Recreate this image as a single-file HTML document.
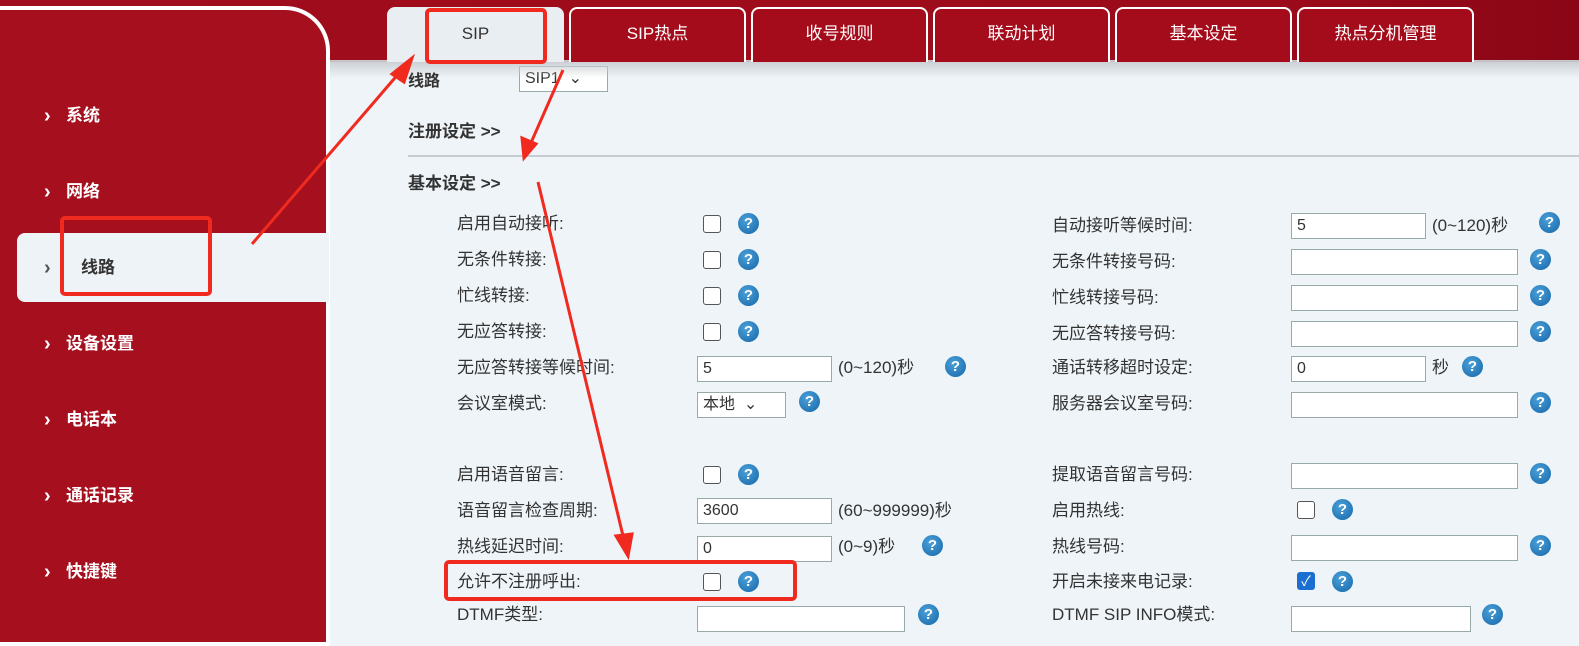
<!DOCTYPE html>
<html><head><meta charset="utf-8"><style>
*{margin:0;padding:0;box-sizing:border-box}
body{width:1579px;height:617px;overflow:hidden;position:relative;background:#eef4f8;font-family:"Liberation Sans","Noto Sans CJK SC",sans-serif;font-size:17px;color:#333}
.hdr{position:absolute;left:0;top:0;width:1579px;height:62px;background:linear-gradient(90deg,#a00d1c 0%,#9c0b1a 80%,#8a0616 100%)}
.shadow{position:absolute;left:330px;top:60px;width:1249px;height:18px;background:linear-gradient(#c9cdd1,rgba(238,244,248,0))}
.side{position:absolute;left:-10px;top:6px;width:340px;height:640px;background:#a50f1e;border:4px solid #fff;border-top-right-radius:45px}
.nav{position:absolute;left:66px;color:#fff;font-weight:bold;font-size:17px;line-height:20px}
.chev{position:absolute;left:44px;color:#fff;font-size:20px;font-weight:bold;line-height:20px}
.active{position:absolute;left:17px;top:233px;width:312px;height:69px;background:#eef3f7;border-radius:8px 0 0 8px}
.tab{position:absolute;top:7px;height:55px;width:177px;border:2px solid #fff;border-bottom:none;border-radius:8px 8px 0 0;background:#a50c1b;color:#fff;text-align:center;line-height:50px;font-size:17px}
.tab.on{background:#e9eef2;color:#333;border-color:#e9eef2}
.lbl{position:absolute;font-size:17px;color:#333;white-space:nowrap;line-height:20px}
.cb{position:absolute;width:18px;height:18px;border:1px solid #555;border-radius:3px;background:#fff}
.cb.chk{background:#1a6fd0;border-color:#1a6fd0}
.q{position:absolute;width:21px;height:21px;border-radius:50%;background:radial-gradient(circle at 40% 35%,#4aa0d8,#1666a8);color:#fff;font-weight:bold;font-size:15px;text-align:center;line-height:21px}
.in{position:absolute;height:26px;border:1px solid #9aa;background:#fff;font-size:16px;padding-left:5px;line-height:24px}
.sec{position:absolute;left:408px;font-weight:bold;font-size:17px;line-height:20px}
</style></head><body>
<div class="hdr"></div>
<div class="in" style="left:519px;top:66px;width:89px;height:26px">SIP1 &nbsp;⌄</div>
<div class="shadow"></div>
<div class="side"></div>
<div class="active"></div>
<div class="chev" style="top:106px">›</div><div class="nav" style="top:106px">系统</div>
<div class="chev" style="top:182px">›</div><div class="nav" style="top:182px">网络</div>
<div class="chev" style="top:258px;color:#555">›</div><div class="nav" style="top:258px;left:81px;color:#333">线路</div>
<div class="chev" style="top:334px">›</div><div class="nav" style="top:334px">设备设置</div>
<div class="chev" style="top:410px">›</div><div class="nav" style="top:410px">电话本</div>
<div class="chev" style="top:486px">›</div><div class="nav" style="top:486px">通话记录</div>
<div class="chev" style="top:562px">›</div><div class="nav" style="top:562px">快捷键</div>

<div class="tab on" style="left:387px">SIP</div>
<div class="tab" style="left:569px">SIP热点</div>
<div class="tab" style="left:751px">收号规则</div>
<div class="tab" style="left:933px">联动计划</div>
<div class="tab" style="left:1115px">基本设定</div>
<div class="tab" style="left:1297px">热点分机管理</div>

<div class="sec" style="top:72px;font-size:16px">线路</div>
<div class="sec" style="top:122px">注册设定 &gt;&gt;</div>
<div style="position:absolute;left:408px;top:155px;width:1171px;height:2px;background:#c8ccd0"></div>
<div class="sec" style="top:174px">基本设定 &gt;&gt;</div>

<div class="lbl" style="left:457px;top:214px">启用自动接听:</div><div class="cb" style="left:703px;top:215px"></div><div class="q" style="left:738px;top:213px">?</div>
<div class="lbl" style="left:457px;top:250px">无条件转接:</div><div class="cb" style="left:703px;top:251px"></div><div class="q" style="left:738px;top:249px">?</div>
<div class="lbl" style="left:457px;top:286px">忙线转接:</div><div class="cb" style="left:703px;top:287px"></div><div class="q" style="left:738px;top:285px">?</div>
<div class="lbl" style="left:457px;top:322px">无应答转接:</div><div class="cb" style="left:703px;top:323px"></div><div class="q" style="left:738px;top:321px">?</div>
<div class="lbl" style="left:457px;top:358px">无应答转接等候时间:</div><div class="in" style="left:697px;top:356px;width:135px">5</div><div class="lbl" style="left:838px;top:358px">(0~120)秒</div><div class="q" style="left:945px;top:356px">?</div>
<div class="lbl" style="left:457px;top:394px">会议室模式:</div><div class="in" style="left:697px;top:392px;width:89px">本地 &nbsp;⌄</div><div class="q" style="left:799px;top:391px">?</div>
<div class="lbl" style="left:457px;top:465px">启用语音留言:</div><div class="cb" style="left:703px;top:466px"></div><div class="q" style="left:738px;top:464px">?</div>
<div class="lbl" style="left:457px;top:501px">语音留言检查周期:</div><div class="in" style="left:697px;top:498px;width:135px">3600</div><div class="lbl" style="left:838px;top:501px">(60~999999)秒</div>
<div class="lbl" style="left:457px;top:537px">热线延迟时间:</div><div class="in" style="left:697px;top:536px;width:135px">0</div><div class="lbl" style="left:838px;top:537px">(0~9)秒</div><div class="q" style="left:922px;top:535px">?</div>
<div class="lbl" style="left:457px;top:572px">允许不注册呼出:</div><div class="cb" style="left:703px;top:573px"></div><div class="q" style="left:738px;top:571px">?</div>
<div class="lbl" style="left:457px;top:605px">DTMF类型:</div><div class="in" style="left:697px;top:606px;width:208px"></div><div class="q" style="left:918px;top:604px">?</div>

<div class="lbl" style="left:1052px;top:216px">自动接听等候时间:</div><div class="in" style="left:1291px;top:213px;width:135px">5</div><div class="lbl" style="left:1432px;top:216px">(0~120)秒</div><div class="q" style="left:1539px;top:212px">?</div>
<div class="lbl" style="left:1052px;top:252px">无条件转接号码:</div><div class="in" style="left:1291px;top:249px;width:227px"></div><div class="q" style="left:1530px;top:249px">?</div>
<div class="lbl" style="left:1052px;top:288px">忙线转接号码:</div><div class="in" style="left:1291px;top:285px;width:227px"></div><div class="q" style="left:1530px;top:285px">?</div>
<div class="lbl" style="left:1052px;top:324px">无应答转接号码:</div><div class="in" style="left:1291px;top:321px;width:227px"></div><div class="q" style="left:1530px;top:321px">?</div>
<div class="lbl" style="left:1052px;top:358px">通话转移超时设定:</div><div class="in" style="left:1291px;top:356px;width:135px">0</div><div class="lbl" style="left:1432px;top:358px">秒</div><div class="q" style="left:1462px;top:356px">?</div>
<div class="lbl" style="left:1052px;top:394px">服务器会议室号码:</div><div class="in" style="left:1291px;top:392px;width:227px"></div><div class="q" style="left:1530px;top:392px">?</div>
<div class="lbl" style="left:1052px;top:465px">提取语音留言号码:</div><div class="in" style="left:1291px;top:463px;width:227px"></div><div class="q" style="left:1530px;top:463px">?</div>
<div class="lbl" style="left:1052px;top:501px">启用热线:</div><div class="cb" style="left:1297px;top:501px"></div><div class="q" style="left:1332px;top:499px">?</div>
<div class="lbl" style="left:1052px;top:537px">热线号码:</div><div class="in" style="left:1291px;top:535px;width:227px"></div><div class="q" style="left:1530px;top:535px">?</div>
<div class="lbl" style="left:1052px;top:572px">开启未接来电记录:</div><div class="cb chk" style="left:1297px;top:572px;color:#fff;font-size:14px;line-height:17px;text-align:center">✓</div><div class="q" style="left:1332px;top:571px">?</div>
<div class="lbl" style="left:1052px;top:605px">DTMF SIP INFO模式:</div><div class="in" style="left:1291px;top:606px;width:180px"></div><div class="q" style="left:1482px;top:604px">?</div>

<svg style="position:absolute;left:0;top:0" width="1579" height="617">
<g fill="none" stroke="#f02a1e" stroke-width="4">
<rect x="427" y="10" width="118" height="52" rx="3"/>
<rect x="62" y="218" width="148" height="76" rx="3"/>
<rect x="446" y="562" width="349" height="37" rx="3"/>
</g>
<g stroke="#f02a1e" stroke-width="3" fill="#f02a1e">
<line x1="252" y1="244" x2="400" y2="72"/>
<polygon points="412,58 392,74 404,82" />
<line x1="563" y1="70" x2="530" y2="145"/>
<polygon points="524,158 522,138 536,144"/>
<line x1="538" y1="182" x2="624" y2="540"/>
<polygon points="628,556 616,536 632,534"/>
</g>
</svg>
</body></html>
